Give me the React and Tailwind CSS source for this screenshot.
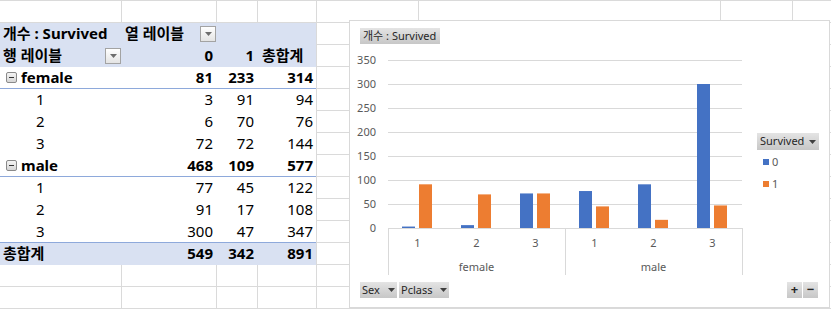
import React from 'react';

const pivotRows = [
  { kind: 'group', label: 'female', v: [81, 233, 314] },
  { kind: 'item', label: '1', v: [3, 91, 94] },
  { kind: 'item', label: '2', v: [6, 70, 76] },
  { kind: 'item', label: '3', v: [72, 72, 144] },
  { kind: 'group', label: 'male', v: [468, 109, 577] },
  { kind: 'item', label: '1', v: [77, 45, 122] },
  { kind: 'item', label: '2', v: [91, 17, 108] },
  { kind: 'item', label: '3', v: [300, 47, 347], last: true },
];

const bars = [
  [3, 91], [6, 70], [72, 72],
  [77, 45], [91, 17], [300, 47],
];

function Tail() {
  return (
    <>
      <div className="w-[102px] shrink-0 border-r border-[#dadada]" />
      <div className="w-[302px] shrink-0 border-r border-[#dadada]" />
      <div className="w-[72px] shrink-0 border-r border-[#dadada]" />
      <div className="flex-1" />
    </>
  );
}

function PlainRow() {
  return (
    <div className="flex h-[22px] border-b border-[#dadada]">
      <div className="w-[122px] shrink-0 border-r border-[#dadada]" />
      <div className="w-[95px] shrink-0 border-r border-[#dadada]" />
      <div className="w-[41px] shrink-0 border-r border-[#dadada]" />
      <div className="w-[59px] shrink-0 border-r border-[#dadada]" />
      <Tail />
    </div>
  );
}

function Caret({ color = '#6d6d6d' }) {
  return (
    <svg width="7" height="4" viewBox="0 0 7 4">
      <polygon points="0,0 7,0 3.5,4" fill={color} />
    </svg>
  );
}

function Dropdown() {
  return (
    <div className="w-[16px] h-[16px] border border-[#a3a3a3] bg-gradient-to-b from-white to-[#e4e4e4] flex items-center justify-center">
      <Caret />
    </div>
  );
}

function PivotRow({ bg, line, children }) {
  return (
    <div className="flex h-[22px] border-b border-[#dadada]">
      <div className={`flex w-[317px] shrink-0 border-r border-[#dadada] ${bg}`}>
        <div className={`flex w-full border-b ${line} -mb-px`}>{children}</div>
      </div>
      <Tail />
    </div>
  );
}

function Nums({ v, bold }) {
  return (
    <>
      <div className={`w-[95px] flex items-center justify-end pr-[4px] ${bold ? 'font-bold' : ''}`}>{v[0]}</div>
      <div className={`w-[41px] flex items-center justify-end pr-[4px] ${bold ? 'font-bold' : ''}`}>{v[1]}</div>
      <div className={`w-[58px] flex items-center justify-end pr-[3px] ${bold ? 'font-bold' : ''}`}>{v[2]}</div>
    </>
  );
}

function FieldButton({ className = '', children }) {
  return (
    <div className={`flex items-center bg-gradient-to-b from-[#e4e4e4] to-[#c7c7c7] text-[#262626] text-[11px] ${className}`}>
      {children}
    </div>
  );
}

function Chart() {
  const y0 = 184;
  const k = 0.48;
  return (
    <div className="absolute left-[349px] top-[20px] w-[481px] h-[288px] border border-[#d9d9d9] bg-white flex flex-col pt-[7px] pb-[9px] font-['Noto_Sans','Noto_Sans_CJK_KR',sans-serif]">
      <div className="pl-[10px] h-[16px] flex">
        <FieldButton className="w-[80px] h-[16px] px-[3px]">개수 : Survived</FieldButton>
      </div>
      <div className="flex h-[236px]">
        <svg width="400" height="236" className="shrink-0" fontSize="11" fill="#595959">
          {[50, 100, 150, 200, 250, 300, 350].map(v => (
            <line key={v} x1="38" x2="392" y1={y0 - v * k + 0.5} y2={y0 - v * k + 0.5} stroke="#d9d9d9" />
          ))}
          {[0, 50, 100, 150, 200, 250, 300, 350].map(v => (
            <text key={v} x="26" y={y0 - v * k + 4} textAnchor="end">{v}</text>
          ))}
          {bars.map(([a, b], i) => {
            const c = 38 + 59 * i + 29.5;
            return (
              <g key={i}>
                <rect x={c - 15.5} y={y0 - a * k} width="13" height={a * k} fill="#4472C4" />
                <rect x={c + 1.5} y={y0 - b * k} width="13" height={b * k} fill="#ED7D31" />
                <text x={c} y="203" textAnchor="middle">{(i % 3) + 1}</text>
              </g>
            );
          })}
          <line x1="38" x2="392" y1={y0 + 0.5} y2={y0 + 0.5} stroke="#d9d9d9" />
          {[38, 215, 392].map(x => (
            <line key={x} x1={x + 0.5} x2={x + 0.5} y1={y0} y2="231" stroke="#d9d9d9" />
          ))}
          <text x="126.5" y="227" textAnchor="middle">female</text>
          <text x="303.5" y="227" textAnchor="middle">male</text>
        </svg>
        <div className="pl-[7px] pt-[89px] flex flex-col">
          <FieldButton className="w-[62px] h-[17px] px-[3px] justify-between">
            <span>Survived</span>
            <Caret color="#404040" />
          </FieldButton>
          <div className="flex items-center h-[22px] pl-[6px] mt-[1px] text-[11px] text-[#595959]">
            <span className="w-[6px] h-[6px] bg-[#4472C4] mr-[3px]" />0
          </div>
          <div className="flex items-center h-[22px] pl-[6px] text-[11px] text-[#595959]">
            <span className="w-[6px] h-[6px] bg-[#ED7D31] mr-[3px]" />1
          </div>
        </div>
      </div>
      <div className="mt-[2px] h-[16px] flex justify-between pl-[10px] pr-[11px]">
        <div className="flex gap-[2px]">
          <FieldButton className="w-[37px] h-[16px] px-[2px] justify-between">
            <span>Sex</span>
            <Caret color="#404040" />
          </FieldButton>
          <FieldButton className="w-[50px] h-[16px] px-[2px] justify-between">
            <span>Pclass</span>
            <Caret color="#404040" />
          </FieldButton>
        </div>
        <div className="flex gap-[1px]">
          <FieldButton className="w-[15px] h-[16px] justify-center text-[#666] text-[13px] font-bold">+</FieldButton>
          <FieldButton className="w-[15px] h-[16px] justify-center text-[#666] text-[13px] font-bold">−</FieldButton>
        </div>
      </div>
    </div>
  );
}

export default function App() {
  return (
    <div className="relative w-[831px] h-[309px] overflow-hidden bg-white text-black text-[15px] font-['Noto_Sans','Noto_Sans_CJK_KR',sans-serif]">
      <div className="border-t border-[#dadada]">
        <PlainRow />
        <PivotRow bg="bg-[#D9E1F2]" line="border-[#D9E1F2]">
          <div className="w-[122px] flex items-center pl-[3px] font-bold">개수 : Survived</div>
          <div className="w-[95px] flex items-center justify-between pl-[3px] pr-[1px] font-bold">
            <span>열 레이블</span>
            <Dropdown />
          </div>
        </PivotRow>
        <PivotRow bg="bg-[#D9E1F2]" line="border-[#D9E1F2]">
          <div className="w-[122px] flex items-center justify-between pl-[3px] pr-[1px] font-bold">
            <span>행 레이블</span>
            <Dropdown />
          </div>
          <div className="w-[95px] flex items-center justify-end pr-[4px] font-bold">0</div>
          <div className="w-[41px] flex items-center justify-end pr-[4px] font-bold">1</div>
          <div className="w-[58px] flex items-center pl-[4px] font-bold">총합계</div>
        </PivotRow>
        {pivotRows.map((r, i) => (
          <PivotRow
            key={i}
            bg="bg-white"
            line={r.kind === 'group' || r.last ? 'border-[#8EA9DB]' : 'border-white'}
          >
            {r.kind === 'group' ? (
              <div className="w-[122px] flex items-center pl-[6px] font-bold">
                <span className="w-[11px] h-[11px] mr-[4px] rounded-[2px] border border-[#8a8a8a] bg-gradient-to-b from-[#f4f4f4] to-[#d6d6d6] flex items-center justify-center">
                  <span className="w-[5px] h-px bg-[#333]" />
                </span>
                {r.label}
              </div>
            ) : (
              <div className="w-[122px] flex items-center pl-[36px]">{r.label}</div>
            )}
            <Nums v={r.v} bold={r.kind === 'group'} />
          </PivotRow>
        ))}
        <PivotRow bg="bg-[#D9E1F2]" line="border-[#D9E1F2]">
          <div className="w-[122px] flex items-center pl-[3px] font-bold">총합계</div>
          <Nums v={[549, 342, 891]} bold />
        </PivotRow>
        <PlainRow />
        <PlainRow />
      </div>
      <Chart />
    </div>
  );
}
